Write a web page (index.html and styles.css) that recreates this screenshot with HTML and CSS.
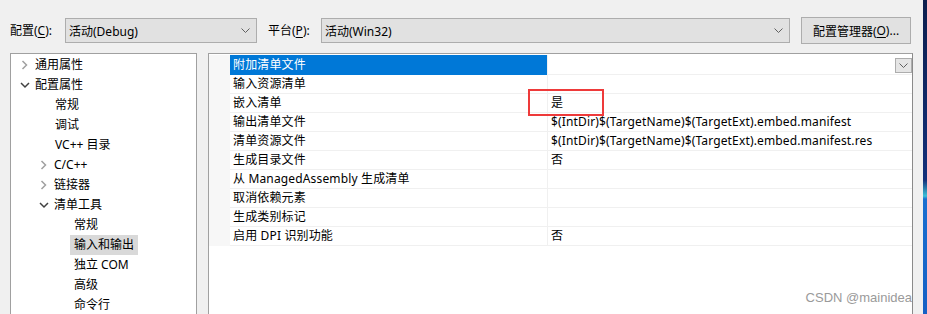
FILE: index.html
```html
<!DOCTYPE html>
<html lang="zh-CN">
<head>
<meta charset="utf-8">
<title>属性页</title>
<link rel="stylesheet" href="styles.css">
</head>
<body>
<div class="window">
  <div class="main">
    <div class="toolbar">
      <span class="label lbl-config">配置(<u>C</u>):</span>
      <div class="combo combo-config"><span>活动(Debug)</span><svg class="chev" width="9" height="6" viewBox="0 0 9 6"><path d="M0.5 0.5 L4.5 4.5 L8.5 0.5" fill="none" stroke="#606060" stroke-width="1"/></svg></div>
      <span class="label lbl-platform">平台(<u>P</u>):</span>
      <div class="combo combo-platform"><span>活动(Win32)</span><svg class="chev" width="9" height="6" viewBox="0 0 9 6"><path d="M0.5 0.5 L4.5 4.5 L8.5 0.5" fill="none" stroke="#606060" stroke-width="1"/></svg></div>
      <div class="button">配置管理器(<u>O</u>)...</div>
    </div>
    <div class="content">
      <div class="tree">
        <div class="node l0"><svg class="arrow" width="7" height="10" viewBox="0 0 7 10"><path d="M1 1 L5 5 L1 9" fill="none" stroke="#a0a0a0" stroke-width="1.5"/></svg><span>通用属性</span></div>
        <div class="node l0"><svg class="arrow" width="10" height="7" viewBox="0 0 10 7"><path d="M1 1 L5 5 L9 1" fill="none" stroke="#404040" stroke-width="1.5"/></svg><span>配置属性</span></div>
        <div class="node l1 leaf"><span>常规</span></div>
        <div class="node l1 leaf"><span>调试</span></div>
        <div class="node l1 leaf"><span>VC++ 目录</span></div>
        <div class="node l1"><svg class="arrow" width="7" height="10" viewBox="0 0 7 10"><path d="M1 1 L5 5 L1 9" fill="none" stroke="#a0a0a0" stroke-width="1.5"/></svg><span>C/C++</span></div>
        <div class="node l1"><svg class="arrow" width="7" height="10" viewBox="0 0 7 10"><path d="M1 1 L5 5 L1 9" fill="none" stroke="#a0a0a0" stroke-width="1.5"/></svg><span>链接器</span></div>
        <div class="node l1"><svg class="arrow" width="10" height="7" viewBox="0 0 10 7"><path d="M1 1 L5 5 L9 1" fill="none" stroke="#404040" stroke-width="1.5"/></svg><span>清单工具</span></div>
        <div class="node l2 leaf"><span>常规</span></div>
        <div class="node l2 leaf"><span class="sel">输入和输出</span></div>
        <div class="node l2 leaf"><span>独立 COM</span></div>
        <div class="node l2 leaf"><span>高级</span></div>
        <div class="node l2 leaf"><span>命令行</span></div>
      </div>
      <div class="grid">
        <div class="row selected"><div class="margin"></div><div class="name">附加清单文件</div><div class="value"><div class="dd"><svg width="9" height="6" viewBox="0 0 9 6"><path d="M0.5 0.5 L4.5 4.5 L8.5 0.5" fill="none" stroke="#606060" stroke-width="1"/></svg></div></div></div>
        <div class="row"><div class="margin"></div><div class="name">输入资源清单</div><div class="value"></div></div>
        <div class="row"><div class="margin"></div><div class="name">嵌入清单</div><div class="value"><span class="mark">是</span></div></div>
        <div class="row"><div class="margin"></div><div class="name">输出清单文件</div><div class="value">$(IntDir)$(TargetName)$(TargetExt).embed.manifest</div></div>
        <div class="row"><div class="margin"></div><div class="name">清单资源文件</div><div class="value">$(IntDir)$(TargetName)$(TargetExt).embed.manifest.res</div></div>
        <div class="row"><div class="margin"></div><div class="name">生成目录文件</div><div class="value">否</div></div>
        <div class="row"><div class="margin"></div><div class="name">从 ManagedAssembly 生成清单</div><div class="value"></div></div>
        <div class="row"><div class="margin"></div><div class="name">取消依赖元素</div><div class="value"></div></div>
        <div class="row"><div class="margin"></div><div class="name">生成类别标记</div><div class="value"></div></div>
        <div class="row"><div class="margin"></div><div class="name">启用 DPI 识别功能</div><div class="value">否</div></div>
        <div class="watermark">CSDN @mainidea</div>
      </div>
    </div>
  </div>
  <div class="edge"></div>
</div>
</body>
</html>
```

FILE: styles.css
```css
* { box-sizing: border-box; }
html, body { margin: 0; padding: 0; }
body {
  background: #f0f0f0;
  font-family: "Noto Sans", "Noto Sans CJK SC", sans-serif;
  font-size: 12px;
  color: #000;
  overflow: hidden;
}
u { text-decoration: underline; text-underline-offset: 2px; }
.window {
  display: flex;
  width: 927px;
  height: 314px;
  overflow: hidden;
}
.main {
  width: 923px;
  display: flex;
  flex-direction: column;
}
.edge {
  width: 4px;
  background: linear-gradient(to bottom, #0d1f4e 0, #13307a 180px, #3cc0d8 196px, #1a6fd0 199px, #1560c4 314px);
}
.toolbar {
  flex: none;
  display: flex;
  align-items: center;
  height: 53px;
  padding: 8px 0 0 10px;
}
.label { line-height: 16px; white-space: nowrap; }
.lbl-config { width: 55px; }
.lbl-platform { margin-left: 11px; width: 53px; }
.combo {
  height: 25px;
  background: #e1e1e1;
  border: 1px solid #adadad;
  display: flex;
  align-items: center;
  justify-content: space-between;
  padding: 0 6px 0 3px;
}
.combo-config { width: 192px; }
.combo-platform { width: 469px; }
.chev { flex: none; }
.button {
  margin-left: 11px;
  width: 110px;
  height: 27px;
  background: #e1e1e1;
  border: 1px solid #adadad;
  display: flex;
  align-items: center;
  justify-content: center;
  white-space: nowrap;
}
.content {
  flex: none;
  display: flex;
  padding-left: 10px;
  gap: 11px;
}
.tree {
  width: 187px;
  height: 300px;
  background: #fff;
  border: 1px solid #a0a0a0;
  padding-top: 1px;
  flex: none;
}
.node {
  height: 20px;
  display: flex;
  align-items: center;
  white-space: nowrap;
}
.node span { padding: 0 4px; line-height: 20px; }
.node .sel { background: #d9d9d9; }
.l0 { padding-left: 9px; }
.l1 { padding-left: 28px; }
.l2 { padding-left: 47px; }
.node svg.arrow { width: 10px; margin-right: 5px; flex: none; }
.l1.leaf { padding-left: 40px; }
.l2.leaf { padding-left: 59px; }
.node.l0 span, .node.l1:not(.leaf) span { padding-left: 0; }
.grid {
  width: 705px;
  height: 300px;
  background: #fff;
  border: 1px solid #a0a0a0;
  border-right-color: #8a8a8a;
  padding-top: 1px;
  flex: none;
  position: relative;
  overflow: hidden;
  letter-spacing: 0.15px;
}
.row {
  display: grid;
  grid-template-columns: 21px 318px 1fr;
  height: 19px;
}
.margin { background: #f7f7f7; }
.name, .value {
  border-bottom: 1px solid #f0f0f0;
  line-height: 19px;
  white-space: nowrap;
}
.name { padding-left: 3px; border-right: 1px solid #f0f0f0; }
.value { padding-left: 3px; position: relative; }
.selected .name { background: #0078d7; color: #fff; border-bottom-color: #0078d7; }
.dd {
  position: absolute;
  right: 0;
  top: 3px;
  width: 17px;
  height: 15px;
  background: #e5e5e5;
  border: 1px solid #adadad;
  display: flex;
  align-items: center;
  justify-content: center;
}
.mark { position: relative; }
.mark::before {
  content: "";
  position: absolute;
  left: -23px;
  top: -5px;
  width: 72px;
  height: 23px;
  border: 2px solid #ee3a3a;
}
.watermark {
  position: absolute;
  right: 0;
  top: 236px;
  font-family: "Liberation Sans", sans-serif;
  font-size: 13px;
  letter-spacing: 0;
  color: #9a9a9a;
}
```
